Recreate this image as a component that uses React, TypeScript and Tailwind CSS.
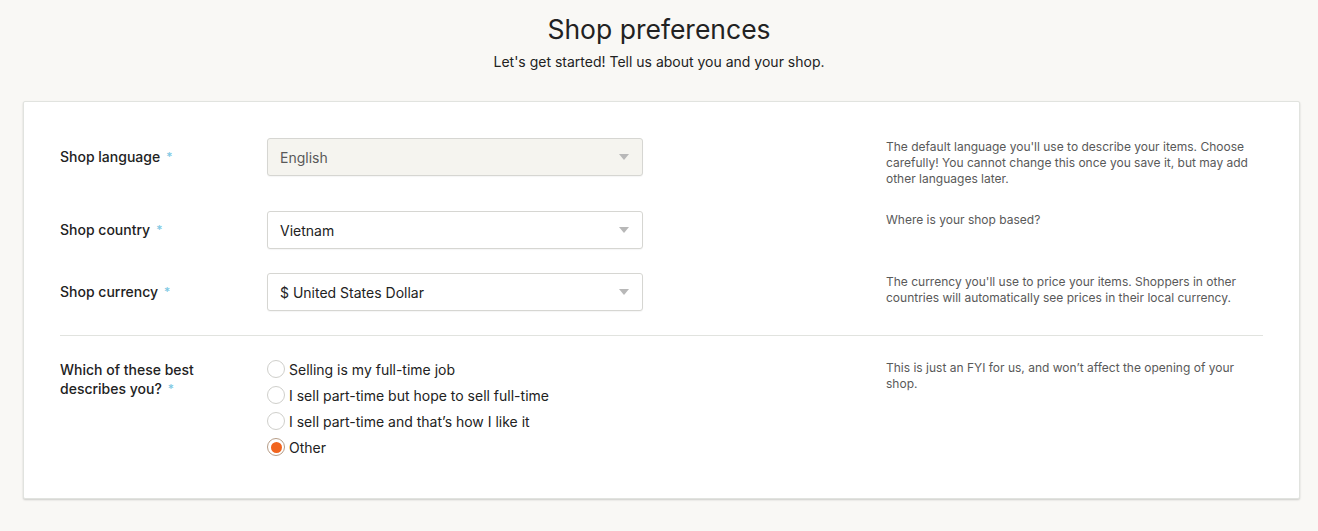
import React from "react";

const font = { fontFamily: "Inter, 'Noto Sans', Arial, sans-serif" };

function Label({ children }: { children: React.ReactNode }) {
  return (
    <div className="text-[14px] font-medium text-[#222222] leading-[19px]">
      {children}
      <span className="ml-[6px] text-[#7ec8e3] text-[12px] align-top">*</span>
    </div>
  );
}

function Select({ value, disabled }: { value: string; disabled?: boolean }) {
  return (
    <div
      className={
        "h-[38px] w-[376px] rounded-[3px] border border-[#d6d6d2] flex items-center justify-between pl-[12px] pr-[12px] shadow-[0_1px_1px_rgba(0,0,0,0.04)] " +
        (disabled ? "bg-[#f5f4ef] text-[#595959]" : "bg-white text-[#222222]")
      }
    >
      <span className="text-[14px]">{value}</span>
      <svg width="10" height="6" viewBox="0 0 10 6" className="mr-[1px]">
        <path d="M0 0 H10 L5 6 Z" fill="#b8b8b8" />
      </svg>
    </div>
  );
}

function Row({
  label,
  children,
  help,
}: {
  label: React.ReactNode;
  children: React.ReactNode;
  help: React.ReactNode;
}) {
  return (
    <div className="grid grid-cols-[207px_376px_1fr_377px]">
      <div className="pt-[9px]">{label}</div>
      <div>{children}</div>
      <div />
      <div className="text-[12px] leading-[16px] text-[#595959] pt-[1px]">{help}</div>
    </div>
  );
}

function Radio({ label, checked }: { label: string; checked?: boolean }) {
  return (
    <div className="flex items-center h-[26px]">
      <div
        className={
          "w-[18px] h-[18px] rounded-full border flex items-center justify-center bg-white " +
          (checked ? "border-[#b69c86]" : "border-[#cfcfcb]")
        }
      >
        {checked && <div className="w-[11px] h-[11px] rounded-full bg-[#f1641e]" />}
      </div>
      <span className="ml-[4px] text-[14px] text-[#222222]">{label}</span>
    </div>
  );
}

export default function App() {
  return (
    <div className="min-h-[531px] bg-[#f9f8f5] pt-[12px]" style={font}>
      <div className="text-center">
        <h1 className="text-[26.5px] leading-[34px] text-[#222222] font-normal">Shop preferences</h1>
        <p className="mt-[7px] text-[14px] leading-[18px] text-[#222222]">
          Let's get started! Tell us about you and your shop.
        </p>
      </div>
      <div className="ml-[23px] mr-[18px] mt-[30px] h-[398px] bg-white border border-[#e1e3df] rounded-[2px] shadow-[0_1px_2px_rgba(0,0,0,0.18)] px-[36px] pt-[36px]">
        <div className="flex flex-col gap-[24px]">
          <Row
            label={<Label>Shop language</Label>}
            help={
              <>
                The default language you'll use to describe your items. Choose carefully! You cannot change this
                once you save it, but may add other languages later.
              </>
            }
          >
            <Select value="English" disabled />
          </Row>
          <Row label={<Label>Shop country</Label>} help="Where is your shop based?">
            <Select value="Vietnam" />
          </Row>
          <Row
            label={<Label>Shop currency</Label>}
            help="The currency you'll use to price your items. Shoppers in other countries will automatically see prices in their local currency."
          >
            <Select value="$ United States Dollar" />
          </Row>
        </div>
        <div className="h-px bg-[#e1e3df] mt-[24px] mb-[24px]" />
        <div className="grid grid-cols-[207px_376px_1fr_377px]">
          <div>
            <div className="text-[14px] font-medium text-[#222222] leading-[19px]">
              Which of these best
              <br />
              describes you?
              <span className="ml-[6px] text-[#7ec8e3] text-[12px] align-top">*</span>
            </div>
          </div>
          <div className="-mt-[4px]">
            <Radio label="Selling is my full-time job" />
            <Radio label="I sell part-time but hope to sell full-time" />
            <Radio label="I sell part-time and that’s how I like it" />
            <Radio label="Other" checked />
          </div>
          <div />
          <div className="text-[12px] leading-[16px] text-[#595959]">
            This is just an FYI for us, and won’t affect the opening of your shop.
          </div>
        </div>
      </div>
    </div>
  );
}
